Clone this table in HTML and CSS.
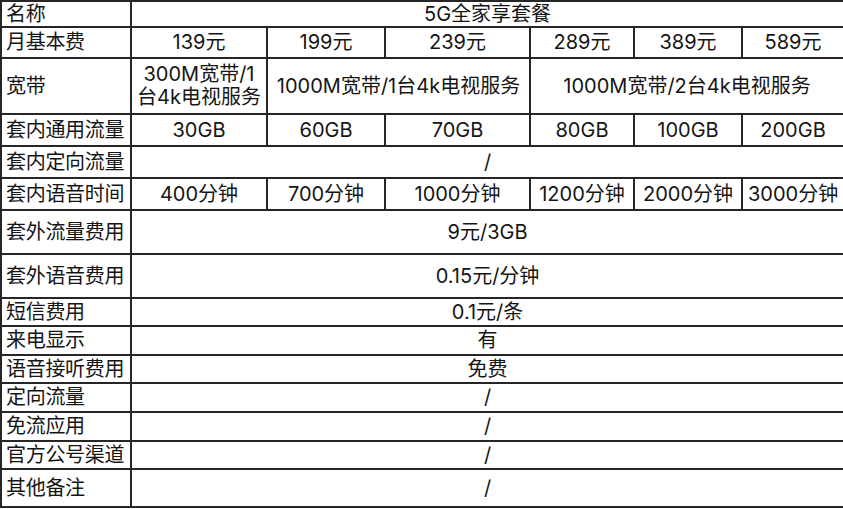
FILE: index.html
```html
<!DOCTYPE html>
<html lang="zh-CN">
<head>
<meta charset="utf-8">
<title>5G全家享套餐</title>
<link rel="stylesheet" href="styles.css">
</head>
<body>
<table class="plan">
  <colgroup>
    <col class="c-label">
    <col class="c1">
    <col class="c2">
    <col class="c3">
    <col class="c4">
    <col class="c5">
    <col class="c6">
  </colgroup>
  <tbody>
    <tr class="r26"><th>名称</th><td colspan="6">5G全家享套餐</td></tr>
    <tr class="r31"><th>月基本费</th><td>139元</td><td>199元</td><td>239元</td><td>289元</td><td>389元</td><td>589元</td></tr>
    <tr class="r56"><th>宽带</th><td>300M宽带/1<br>台4k电视服务</td><td colspan="2">1000M宽带/1台4k电视服务</td><td colspan="3">1000M宽带/2台4k电视服务</td></tr>
    <tr class="r32"><th>套内通用流量</th><td>30GB</td><td>60GB</td><td>70GB</td><td>80GB</td><td>100GB</td><td>200GB</td></tr>
    <tr class="r32"><th>套内定向流量</th><td colspan="6">/</td></tr>
    <tr class="r32"><th>套内语音时间</th><td>400分钟</td><td>700分钟</td><td>1000分钟</td><td>1200分钟</td><td>2000分钟</td><td>3000分钟</td></tr>
    <tr class="r44"><th>套外流量费用</th><td colspan="6">9元/3GB</td></tr>
    <tr class="r44"><th>套外语音费用</th><td colspan="6">0.15元/分钟</td></tr>
    <tr class="r28"><th>短信费用</th><td colspan="6">0.1元/条</td></tr>
    <tr class="r29"><th>来电显示</th><td colspan="6">有</td></tr>
    <tr class="r28"><th>语音接听费用</th><td colspan="6">免费</td></tr>
    <tr class="r29"><th>定向流量</th><td colspan="6">/</td></tr>
    <tr class="r29"><th>免流应用</th><td colspan="6">/</td></tr>
    <tr class="r28"><th>官方公号渠道</th><td colspan="6">/</td></tr>
    <tr class="r38"><th>其他备注</th><td colspan="6">/</td></tr>
  </tbody>
</table>
</body>
</html>
```

FILE: styles.css
```css
html, body {
  margin: 0;
  padding: 0;
  background: #ffffff;
}

.plan {
  border-collapse: collapse;
  table-layout: fixed;
  width: 843px;
  margin: 0;
  font-family: Inter, "Noto Sans CJK SC", sans-serif;
  font-size: 20px;
  line-height: 23px;
  color: #151515;
}

.c-label { width: 130px; }
.c1 { width: 136px; }
.c2 { width: 118px; }
.c3 { width: 145px; }
.c4 { width: 104px; }
.c5 { width: 108px; }
.c6 { width: 102px; }

.plan th,
.plan td {
  border: 2px solid #262626;
  padding: 0 2px;
  vertical-align: middle;
  white-space: nowrap;
  overflow: hidden;
}

.plan th {
  text-align: left;
  font-weight: normal;
  font-family: "Liberation Serif", "Noto Sans CJK SC", serif;
  padding-left: 4px;
  letter-spacing: -0.3px;
}

.plan td {
  text-align: center;
}

.r26 { height: 26px; }
.r28 { height: 28px; }
.r29 { height: 29px; }
.r31 { height: 31px; }
.r32 { height: 32px; }
.r38 { height: 38px; }
.r44 { height: 44px; }
.r56 { height: 56px; }
```
